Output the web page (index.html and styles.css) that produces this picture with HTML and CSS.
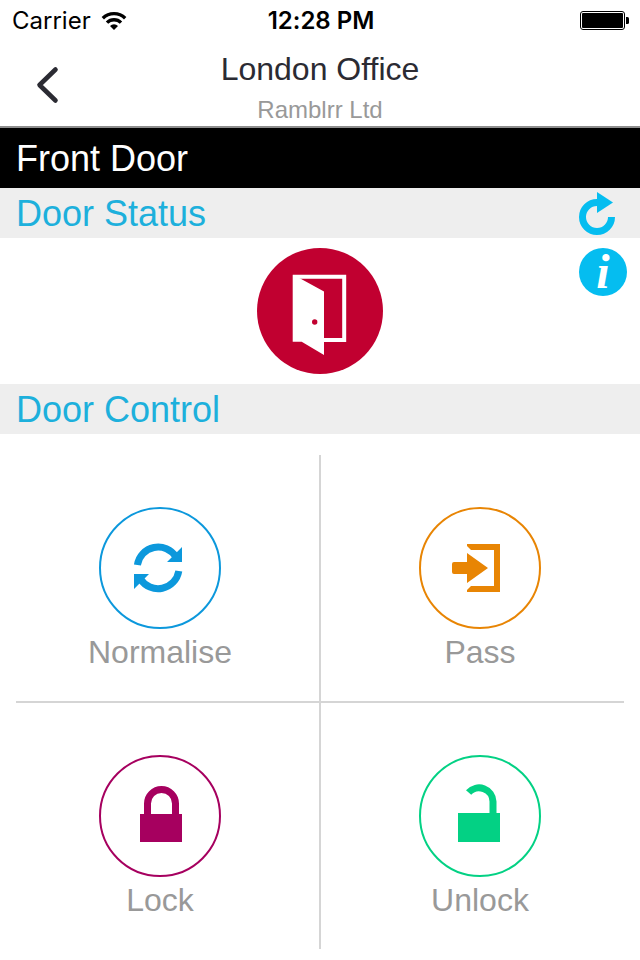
FILE: index.html
```
<!DOCTYPE html>
<html lang="en">
<head>
	<meta charset="UTF-8">
	<meta name="viewport" content="width=device-width">
	<title>London Office - Front Door</title>
	<link rel="stylesheet" href="styles.css">
</head>
<body>
<div class="statusbar">
	<div class="carrier">
		<span>Carrier</span>
		<svg width="26" height="20" viewBox="0 0 26 20" aria-hidden="true">
			<g fill="none" stroke="#000" stroke-width="3.4">
				<path d="M1.8 7.2A16 16 0 0 1 24.2 7.2"/>
				<path d="M6 11.6A10 10 0 0 1 20 11.6"/>
			</g>
			<path d="M13 19L9 15A5.6 5.6 0 0 1 17 15Z"/>
		</svg>
	</div>
	<div class="time">12:28 PM</div>
	<svg class="battery" width="50" height="20" viewBox="0 0 50 20" aria-hidden="true">
		<rect x="0.5" y="0.5" width="44" height="18" rx="2.5" fill="none" stroke="#000"/>
		<rect x="2" y="2" width="41" height="15" rx="1"/>
		<path d="M46 6H47.5Q49 6 49 7.5V11.5Q49 13 47.5 13H46Z"/>
	</svg>
</div>
<header class="navbar">
	<button class="back" type="button" aria-label="Back">
		<svg width="24" height="38" viewBox="0 0 24 38">
			<path d="M19.5 3.5L3.5 19L19.5 34.5" fill="none" stroke="#2b2b33" stroke-width="4.6" stroke-linecap="round" stroke-linejoin="round"/>
		</svg>
	</button>
	<div class="titles">
		<h1>London Office</h1>
		<p>Ramblrr Ltd</p>
	</div>
</header>
<main>
	<h2 class="door">Front Door</h2>

	<div class="section">
		<h3>Door Status</h3>
		<button type="button" aria-label="Refresh">
			<svg width="48" height="48" viewBox="0 0 48 48">
				<path d="M32.5 28A14.5 14.5 0 1 1 18 13.5" fill="none" stroke="#05bdf0" stroke-width="7"/>
				<path d="M18 3L34 13.5L18 24Z" fill="#05bdf0"/>
			</svg>
		</button>
	</div>
	<div class="state">
		<svg class="state-icon" width="126" height="126" viewBox="0 0 126 126" role="img" aria-label="Door open">
			<circle cx="63" cy="63" r="63" fill="#c10030"/>
			<path d="M36 28.7H87.2V91.9H67" fill="none" stroke="#fff" stroke-width="4"/>
			<path d="M67 43.5V107L44.7 93.8H35.7V26.7L43.7 30.7Z" fill="#fff"/>
			<circle cx="57.7" cy="74" r="2.7" fill="#c10030"/>
		</svg>
		<button class="info" type="button" aria-label="Information">i</button>
	</div>

	<div class="section">
		<h3>Door Control</h3>
	</div>
	<div class="controls">
		<button class="control normalise" type="button">
			<svg width="122" height="122" viewBox="0 0 122 122">
				<circle class="ring" cx="61" cy="61" r="60"/>
				<path class="line" d="M38.4 58A21 21 0 0 1 77 50M79.8 64A21 21 0 0 1 41.4 72"/>
				<path class="solid" d="M83 40V55H68ZM35 82V67H50Z"/>
			</svg>
			<span>Normalise</span>
		</button>
		<button class="control pass" type="button">
			<svg width="122" height="122" viewBox="0 0 122 122">
				<circle class="ring" cx="61" cy="61" r="60"/>
				<path class="solid" d="M48 37H81V85H48V83L52 79H75V43H52L48 39Z"/>
				<path class="solid" d="M48 46L69 61L48 76V67H35Q33 67 33 65V57Q33 55 35 55H48Z"/>
			</svg>
			<span>Pass</span>
		</button>
		<button class="control lock" type="button">
			<svg width="122" height="122" viewBox="0 0 122 122">
				<circle class="ring" cx="61" cy="61" r="60"/>
				<path class="line" d="M48.5 60V48.5A14 14 0 0 1 76.5 48.5V60"/>
				<path class="solid" d="M41 59H83V87H41Z"/>
			</svg>
			<span>Lock</span>
		</button>
		<button class="control unlock" type="button">
			<svg width="122" height="122" viewBox="0 0 122 122">
				<circle class="ring" cx="61" cy="61" r="60"/>
				<path class="line" d="M49.6 37.5A14 14 0 0 1 74 46.5V60"/>
				<path class="solid" d="M39 58H81V87H39Z"/>
			</svg>
			<span>Unlock</span>
		</button>
	</div>
</main>
</body>
</html>
```

FILE: styles.css
```
* {
	box-sizing: border-box;
}
body {
	margin: 0;
	background-color: #FFF;
	font-family: "Liberation Sans", Arial, sans-serif;
	font-variant-ligatures: none;
}
h1, h2, h3, p {
	margin: 0;
	font-weight: normal;
}
svg {
	display: block;
}
button {
	margin: 0;
	padding: 0;
	border: none;
	background: none;
	font: inherit;
	cursor: pointer;
}

/* Phone status bar */
.statusbar {
	display: grid;
	grid-template-columns: 1fr auto 1fr;
	align-items: center;
	padding: 2px 10px 0 12px;
	font-family: Inter, sans-serif;
	font-size: 24px;
	line-height: 38px;
}
.carrier {
	display: flex;
	align-items: center;
	gap: 10px;
}
.time {
	font-weight: 600;
}
.battery {
	justify-self: end;
}

.navbar {
	display: grid;
	grid-template-columns: 80px 1fr 80px;
	padding-top: 4px;
	border-bottom: 2px solid #8E8E8E;
}
.back {
	display: flex;
	align-items: center;
	padding-left: 36px;
}
.titles {
	padding: 5px 0 2px;
	text-align: center;
}
.titles h1 {
	color: #2B2B33;
	font-size: 32px;
	line-height: 40px;
}
.titles p {
	margin-top: 7px;
	color: #999;
	font-size: 24px;
	line-height: 28px;
}

.door {
	padding: 2px 16px 0;
	background-color: #000;
	color: #FFF;
	font-size: 36px;
	line-height: 58px;
}
.section {
	display: flex;
	align-items: center;
	justify-content: space-between;
	padding: 0 13px 0 16px;
	background-color: #EEE;
}
.section h3 {
	padding-top: 2px;
	color: #1DB0DC;
	font-size: 36px;
	line-height: 48px;
}
.state {
	display: grid;
	grid-template-columns: 1fr auto 1fr;
	align-items: start;
	padding: 10px 13px;
}
.state-icon {
	grid-column: 2;
}
.info {
	justify-self: end;
	width: 48px;
	height: 48px;
	border-radius: 50%;
	background-color: #05BDF0;
	color: #FFF;
	font: italic bold 48px/48px "Liberation Serif", serif;
}

/* The horizontal line sits in the gap between the rows */
.controls {
	display: grid;
	grid-template-columns: 1fr 1fr;
	grid-auto-rows: 246px;
	row-gap: 2px;
	margin-top: 21px;
	background:
		linear-gradient(#D5D5D5, #D5D5D5) center / 2px 100% no-repeat,
		linear-gradient(#D5D5D5, #D5D5D5) center / calc(100% - 32px) 2px no-repeat;
}
.control {
	display: flex;
	flex-direction: column;
	align-items: center;
	gap: 3px;
	padding-top: 52px;
	color: #999;
	font-size: 32px;
	line-height: 40px;
}
.ring {
	fill: none;
	stroke: var(--color);
	stroke-width: 2;
}
.line {
	fill: none;
	stroke: var(--color);
	stroke-width: 7;
}
.solid {
	fill: var(--color);
}
.normalise {
	--color: #0C98DC;
}
.pass {
	--color: #E88504;
}
.lock {
	--color: #A6005F;
}
.unlock {
	--color: #03D184;
}
```
